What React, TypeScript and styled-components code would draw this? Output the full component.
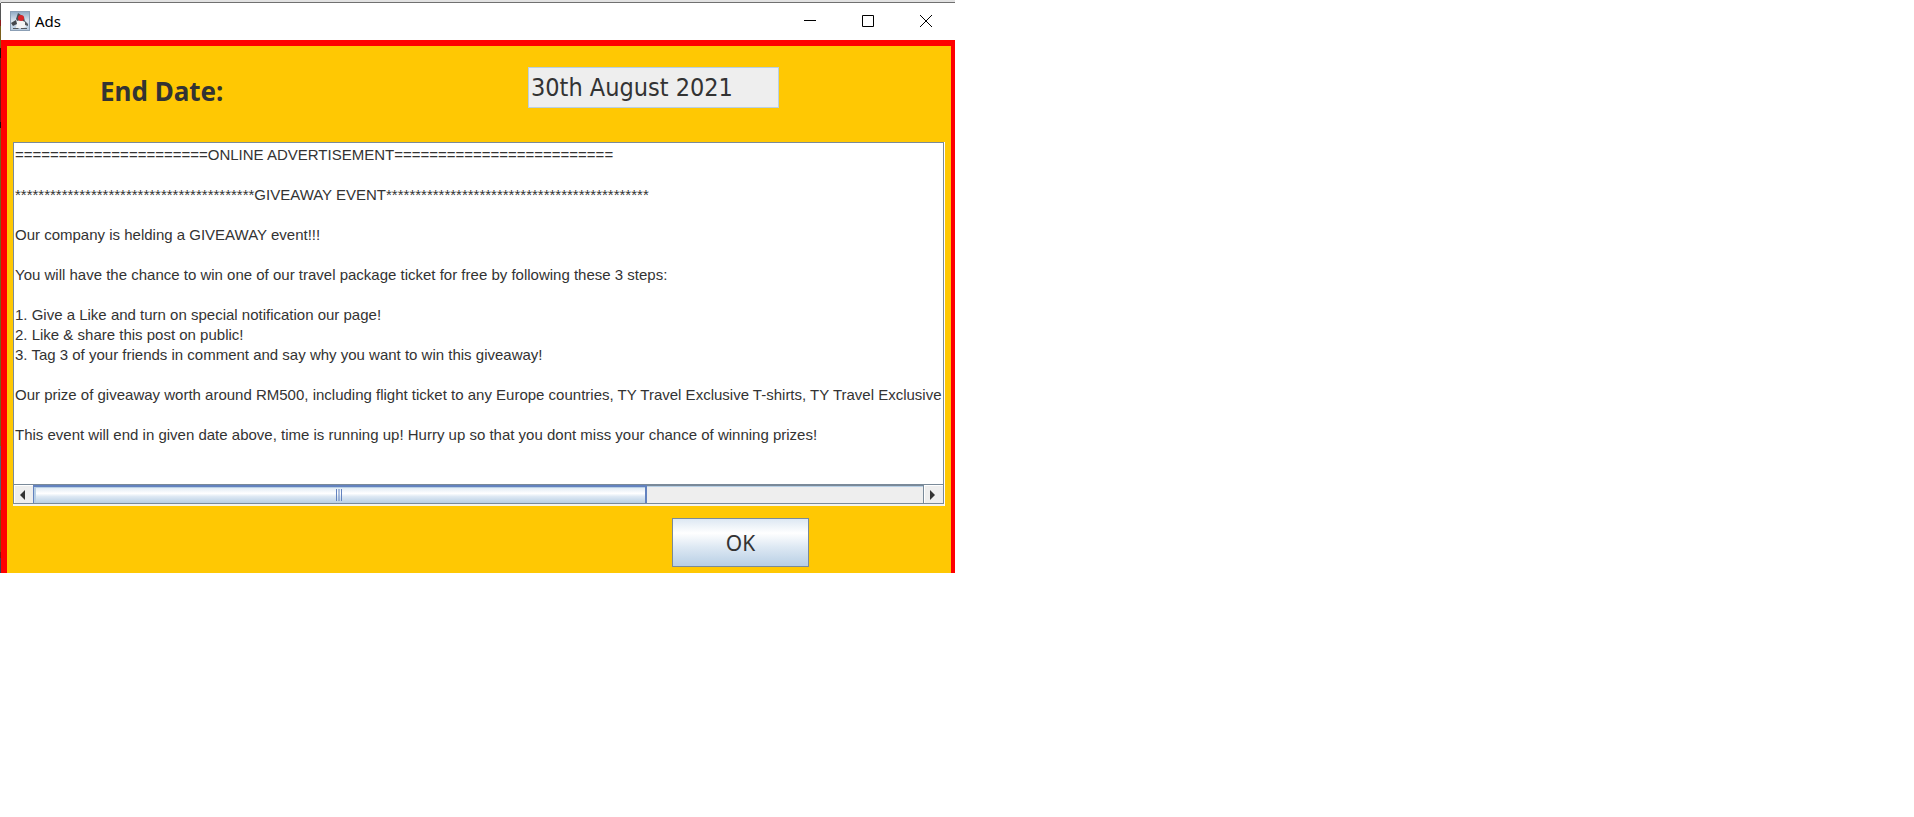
import React from "react";
import styled, { createGlobalStyle } from "styled-components";

const ui = `"Noto Sans", "Open Sans", sans-serif`;
const field = `"DejaVu Sans Condensed", "DejaVu Sans", sans-serif`;

const Global = createGlobalStyle`
  *, *::before, *::after { box-sizing: border-box; }
  body { margin: 0; background: #fff; font-family: ${ui}; }
`;

const Desktop = styled.main`
  width: calc(50% - 2px);
  padding-left: 1px;
  background: linear-gradient(
    #d8d8d8 0 3px, #555 3px 20px, #8c1a1a 20px 26px, #7a5f1c 26px 48px, #111 48px 58px,
    #6e1a1a 58px 122px, #111 122px 128px, #7a5f1c 128px 446px, #54607a 446px 510px,
    #7a4a10 510px 552px, #6e1a1a 552px 558px, #3a3f5c 558px
  );
`;

const Backdrop = styled.div`
  height: 3px;
  background: #e2e2e2;
  border-bottom: 1px solid #707070;
`;

const TitleBar = styled.header`
  display: flex;
  align-items: center;
  height: 37px;
  padding: 0 0 2px 9px;
  background: #fff;
`;

const Title = styled.h1`
  flex: 1;
  margin: 0 0 0 5px;
  font: 400 15px/20px ${ui};
  color: #000;
`;

const CaptionButton = styled.button`
  display: flex;
  align-items: center;
  justify-content: center;
  width: 58px;
  height: 35px;
  padding: 0;
  border: 0;
  background: none;
`;

const Content = styled.section`
  padding: 21px 7px 6px 6px;
  border: solid #f00;
  border-width: 6px 4px 0 6px;
  background: #ffc803;
`;

const DateRow = styled.div`
  display: flex;
  justify-content: space-between;
  align-items: flex-start;
  height: 75px;
  padding: 0 165px 0 87px;
`;

const DateLabel = styled.label`
  padding-top: 6px;
  font: 700 26px/36px ${ui};
  color: #333;
`;

const DateField = styled.input`
  width: 251px;
  height: 41px;
  padding: 0 2px;
  border: 1px solid #b8cfe5;
  background: #eee;
  font: 400 25px/36px ${field};
  color: #333;
`;

const ScrollPane = styled.div`
  border: 1px solid #7a8a99;
  border-bottom: 0;
  box-shadow: 1px 0 #fff;
  background: #fff;
`;

const Message = styled.textarea`
  display: block;
  width: 100%;
  height: 341px;
  padding: 2px 0 0 1px;
  border: 0;
  outline: 0;
  resize: none;
  overflow: hidden;
  white-space: pre;
  background: #fff;
  font: 400 15px/20px "Liberation Sans", Arial, sans-serif;
  color: #333;
`;

const ScrollBar = styled.div`
  display: flex;
  height: 20px;
  border: solid #7a8a99;
  border-width: 1px 0;
  background: #eee;
`;

const ArrowButton = styled.button`
  display: flex;
  align-items: center;
  justify-content: center;
  width: 19px;
  padding: 0 3px 0 0;
  border: 1px solid #fff;
  border-width: 1px 0 0 1px;
  background: #eee;
`;

const Track = styled.div`
  flex: 1;
  border: solid #7a8a99;
  border-width: 1px 1px 0 0;
  box-shadow: inset 0 1px #b8cfe5;
`;

const Thumb = styled.div`
  display: flex;
  align-items: center;
  justify-content: center;
  width: 69%;
  height: 100%;
  border: solid #6382bf;
  border-width: 1px 2px 0 1px;
  box-shadow: 0 -1px #6382bf, inset 2px 1px #b8cfe5;
  background: linear-gradient(#dde8f3, #fff 40%, #dde8f3 60%, #b8cfe5);
`;

const Edge = styled.div`
  height: 2px;
  margin: 0 -1px;
  background: #f4f4ee;
`;

const Actions = styled.div`
  display: flex;
  justify-content: flex-end;
  padding: 12px 135px 0 0;
`;

const OkButton = styled.button`
  width: 137px;
  height: 49px;
  padding: 0;
  border: 1px solid #7a8a99;
  background: linear-gradient(#dde8f3, #fff 30%, #dde8f3 60%, #b8cfe5);
  font: 400 21px/28px ${ui};
  color: #333;
`;

const message = [
  "=".repeat(22) + "ONLINE ADVERTISEMENT" + "=".repeat(25),
  "",
  "*".repeat(41) + "GIVEAWAY EVENT" + "*".repeat(45),
  "",
  "Our company is helding a GIVEAWAY event!!!",
  "",
  "You will have the chance to win one of our travel package ticket for free by following these 3 steps:",
  "",
  "1. Give a Like and turn on special notification our page!",
  "2. Like & share this post on public!",
  "3. Tag 3 of your friends in comment and say why you want to win this giveaway!",
  "",
  "Our prize of giveaway worth around RM500, including flight ticket to any Europe countries, TY Travel Exclusive T-shirts, TY Travel Exclusive Gift",
  "",
  "This event will end in given date above, time is running up! Hurry up so that you dont miss your chance of winning prizes!",
].join("\n");

function JavaIcon() {
  return (
    <svg width="20" height="20" viewBox="0 0 20 20" aria-hidden="true">
      <defs>
        <linearGradient id="tile" x2="0" y2="1">
          <stop stopColor="#8fa9c4" />
          <stop offset=".5" stopColor="#dbe5ef" />
          <stop offset="1" stopColor="#b4c8dc" />
        </linearGradient>
      </defs>
      <rect x=".5" y=".5" width="19" height="19" fill="url(#tile)" stroke="#8b9fb5" />
      <path d="M8 2 L11 4 L14 6 L15 11 L8 11 L6 8 Z" fill="#4a4d52" />
      <path d="M7 10 Q11 8 15 11 L16 16 L13 17 L6 17 Z" fill="#f4f4f4" />
      <path d="M1 12 L6 9 L7 13 L3 15 Z" fill="#44474c" />
      <path d="M15 10 L18 13 L18 15 L15 14 Z" fill="#55585c" />
      <path d="M3 17 H8 L9 18 H3 Z M11 17 H17 L17 18 H11 Z" fill="#55585c" />
      <circle cx="11" cy="7" r="3" fill="#d8252a" />
    </svg>
  );
}

export default function App() {
  return (
    <>
      <Global />
      <Desktop>
        <Backdrop />
        <TitleBar>
          <JavaIcon />
          <Title>Ads</Title>
          <CaptionButton aria-label="Minimize">
            <svg width="12" height="12"><path d="M0 5.5H12" stroke="#000" /></svg>
          </CaptionButton>
          <CaptionButton aria-label="Maximize">
            <svg width="12" height="12"><path d="M.5 .5H11.5V11.5H.5Z" fill="none" stroke="#000" /></svg>
          </CaptionButton>
          <CaptionButton aria-label="Close">
            <svg width="12" height="12"><path d="M0 0L12 12M12 0L0 12" stroke="#000" /></svg>
          </CaptionButton>
        </TitleBar>
        <Content>
          <DateRow>
            <DateLabel htmlFor="end-date">End Date:</DateLabel>
            <DateField id="end-date" readOnly value="30th August 2021" />
          </DateRow>
          <ScrollPane>
            <Message aria-label="Advertisement" readOnly wrap="off" value={message} />
            <ScrollBar>
              <ArrowButton aria-label="Scroll left">
                <svg width="5" height="10"><path d="M5 0V10L0 5Z" fill="#333" /></svg>
              </ArrowButton>
              <Track>
                <Thumb>
                  <svg width="7" height="13"><path d="M.5 0V12M3 0V12M5.5 0V12" stroke="#6382bf" /></svg>
                </Thumb>
              </Track>
              <ArrowButton aria-label="Scroll right">
                <svg width="5" height="10"><path d="M0 0V10L5 5Z" fill="#333" /></svg>
              </ArrowButton>
            </ScrollBar>
            <Edge />
          </ScrollPane>
          <Actions>
            <OkButton>OK</OkButton>
          </Actions>
        </Content>
      </Desktop>
    </>
  );
}
